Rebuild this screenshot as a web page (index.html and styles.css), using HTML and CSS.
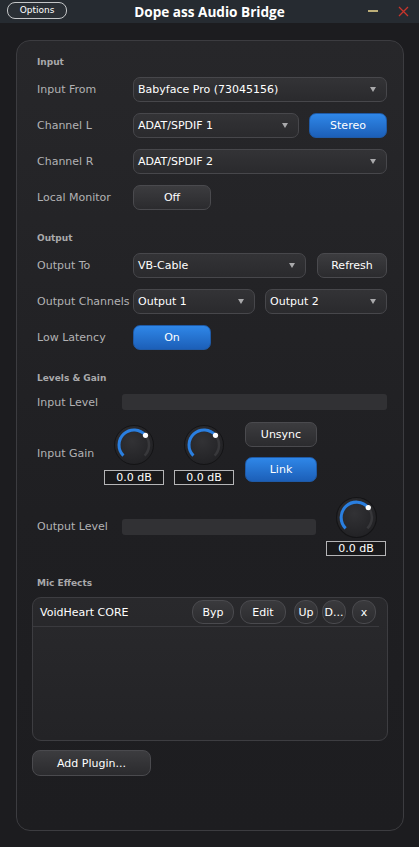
FILE: index.html
```html
<!DOCTYPE html>
<html>
<head>
<meta charset="utf-8">
<title>Dope ass Audio Bridge</title>
<link rel="stylesheet" href="styles.css">
</head>
<body>
<div class="app">
  <header class="titlebar">
    <div class="tb-left"><button class="opt-btn">Options</button></div>
    <div class="title">Dope ass Audio Bridge</div>
    <div class="tb-right">
      <span class="win-min"></span>
      <svg class="win-close" width="11" height="11" viewBox="0 0 11 11"><path d="M1 1L10 10M10 1L1 10" stroke="#c8352c" stroke-width="1.3" fill="none"/></svg>
    </div>
  </header>

  <main class="panel">
    <div class="sec first">Input</div>
    <div class="rows">
      <div class="row">
        <span class="lbl">Input From</span>
        <div class="combo grow"><span>Babyface Pro (73045156)</span><i class="arrow"></i></div>
      </div>
      <div class="row">
        <span class="lbl">Channel L</span>
        <div class="combo grow"><span>ADAT/SPDIF 1</span><i class="arrow"></i></div>
        <button class="btn blue w78 ml10">Stereo</button>
      </div>
      <div class="row">
        <span class="lbl">Channel R</span>
        <div class="combo grow"><span>ADAT/SPDIF 2</span><i class="arrow"></i></div>
      </div>
      <div class="row">
        <span class="lbl">Local Monitor</span>
        <button class="btn w78">Off</button>
      </div>
    </div>

    <div class="sec">Output</div>
    <div class="rows">
      <div class="row">
        <span class="lbl">Output To</span>
        <div class="combo grow"><span>VB-Cable</span><i class="arrow"></i></div>
        <button class="btn w70 ml11">Refresh</button>
      </div>
      <div class="row">
        <span class="lbl">Output Channels</span>
        <div class="combo grow"><span>Output 1</span><i class="arrow"></i></div>
        <div class="combo grow ml10"><span>Output 2</span><i class="arrow"></i></div>
      </div>
      <div class="row">
        <span class="lbl">Low Latency</span>
        <button class="btn blue w78">On</button>
      </div>
    </div>

    <div class="sec">Levels &amp; Gain</div>
    <div class="level-row">
      <span class="lbl lbl-level">Input Level</span>
      <div class="meter"></div>
    </div>

    <div class="gain-row">
      <span class="lbl lbl-gain">Input Gain</span>
      <div class="knob-col">
        <svg class="knob" width="40" height="40" viewBox="0 0 40 40">
          <defs><radialGradient id="kg1" cx="45%" cy="40%" r="60%"><stop offset="0" stop-color="#323235"/><stop offset="1" stop-color="#222225"/></radialGradient></defs>
          <circle cx="20" cy="20" r="19.5" fill="url(#kg1)" stroke="#141416"/>
          <path d="M31.49 10.36A15 15 0 0 1 30.61 30.61" stroke="#38383b" stroke-width="2.5" fill="none"/>
          <path d="M9.39 30.61A15 15 0 1 1 31.49 10.36" stroke="#2a7fe0" stroke-width="3" fill="none"/>
          <circle cx="31.49" cy="10.36" r="2.6" fill="#ffffff"/>
        </svg>
        <div class="val">0.0 dB</div>
      </div>
      <div class="knob-col ml10">
        <svg class="knob" width="40" height="40" viewBox="0 0 40 40">
          <defs><radialGradient id="kg2" cx="45%" cy="40%" r="60%"><stop offset="0" stop-color="#323235"/><stop offset="1" stop-color="#222225"/></radialGradient></defs>
          <circle cx="20" cy="20" r="19.5" fill="url(#kg2)" stroke="#141416"/>
          <path d="M31.49 10.36A15 15 0 0 1 30.61 30.61" stroke="#38383b" stroke-width="2.5" fill="none"/>
          <path d="M9.39 30.61A15 15 0 1 1 31.49 10.36" stroke="#2a7fe0" stroke-width="3" fill="none"/>
          <circle cx="31.49" cy="10.36" r="2.6" fill="#ffffff"/>
        </svg>
        <div class="val">0.0 dB</div>
      </div>
      <div class="sync-col">
        <button class="btn w72">Unsync</button>
        <button class="btn blue w72">Link</button>
      </div>
    </div>

    <div class="out-row">
      <span class="lbl lbl-level">Output Level</span>
      <div class="meter"></div>
      <div class="knob-col out-knob">
        <svg class="knob" width="41" height="41" viewBox="0 0 40 40">
          <defs><radialGradient id="kg3" cx="45%" cy="40%" r="60%"><stop offset="0" stop-color="#323235"/><stop offset="1" stop-color="#222225"/></radialGradient></defs>
          <circle cx="20" cy="20" r="19.5" fill="url(#kg3)" stroke="#141416"/>
          <path d="M31.49 10.36A15 15 0 0 1 30.61 30.61" stroke="#38383b" stroke-width="2.5" fill="none"/>
          <path d="M9.39 30.61A15 15 0 1 1 31.49 10.36" stroke="#2a7fe0" stroke-width="3" fill="none"/>
          <circle cx="31.49" cy="10.36" r="2.6" fill="#ffffff"/>
        </svg>
        <div class="val">0.0 dB</div>
      </div>
    </div>

    <div class="sec mic">Mic Effects</div>
    <div class="fx-box">
      <div class="fx-item">
        <span class="fx-name">VoidHeart CORE</span>
        <button class="pill w42">Byp</button>
        <button class="pill w46">Edit</button>
        <button class="pill w24 pill-up">Up</button>
        <button class="pill w24 pill-down">D...</button>
        <button class="pill w24">x</button>
      </div>
    </div>
    <button class="btn add-btn">Add Plugin...</button>
  </main>
</div>
</body>
</html>
```

FILE: styles.css
```css
* { box-sizing: border-box; }
html, body { margin: 0; padding: 0; }
body {
  background: #1c1c1f;
  font-family: "DejaVu Sans", "Liberation Sans", sans-serif;
  font-size: 11px;
  color: #ffffff;
}
.app {
  height: 847px;
  display: flex;
  flex-direction: column;
}
.titlebar {
  height: 23px;
  flex: none;
  background: #262b31;
  display: grid;
  grid-template-columns: 1fr auto 1fr;
  align-items: center;
}
.tb-left { padding-left: 7px; display: flex; }
.opt-btn {
  width: 60px;
  height: 17px;
  margin-top: -2px;
  border: 1px solid #c4c6c8;
  border-radius: 8px;
  background: #2a2f35;
  color: #ffffff;
  font-family: "DejaVu Sans", sans-serif;
  font-size: 9px;
  padding: 0;
  line-height: 15px;
}
.title {
  font-family: "Open Sans", "DejaVu Sans", sans-serif;
  font-weight: 700;
  font-size: 13.6px;
  color: #ffffff;
  margin-top: -1px;
}
.tb-right {
  display: flex;
  justify-content: flex-end;
  align-items: center;
  gap: 20px;
  padding-right: 10px;
  margin-top: -1px;
}
.win-min {
  display: block;
  width: 10px;
  height: 2px;
  background: #bcae78;
}
.win-close { display: block; }

.panel {
  flex: 1;
  margin: 17px 15px 16px 16px;
  border: 1px solid #3c3c40;
  border-radius: 14px;
  background: linear-gradient(180deg, #27272a 0%, #1f1f22 60%, #1d1d20 100%);
  padding: 0 16px 0 20px;
  display: flex;
  flex-direction: column;
}
.sec {
  height: 12px;
  line-height: 12px;
  font-size: 9px;
  font-weight: bold;
  color: #a9a9ab;
  margin-top: 22px;
}
.sec.first { margin-top: 15px; }
.sec.mic { margin-top: 21px; }
.rows {
  margin-top: 9px;
  display: flex;
  flex-direction: column;
  gap: 11px;
}
.row {
  display: flex;
  align-items: center;
  height: 25px;
}
.lbl {
  width: 96px;
  flex: none;
  color: #b2b2b4;
  font-size: 11px;
  white-space: nowrap;
}
.grow { flex: 1; }
.ml10 { margin-left: 10px; }
.ml11 { margin-left: 11px; }
.combo {
  height: 25px;
  border: 1px solid #47474b;
  border-radius: 7px;
  background: linear-gradient(180deg, #333336 0%, #2a2a2d 100%);
  display: flex;
  align-items: center;
  padding: 0 10px 0 4px;
  color: #ffffff;
  font-size: 11px;
  min-width: 0;
}
.combo span { flex: 1; white-space: nowrap; }
.arrow {
  width: 0;
  height: 0;
  border-left: 3.5px solid transparent;
  border-right: 3.5px solid transparent;
  border-top: 5px solid #a9a9ab;
}
.btn {
  height: 25px;
  border: 1px solid #4a4a4e;
  border-radius: 7px;
  background: linear-gradient(180deg, #3c3c3f 0%, #2b2b2e 100%);
  color: #ffffff;
  font-family: "DejaVu Sans", sans-serif;
  font-size: 11px;
  padding: 0;
  flex: none;
}
.btn.blue {
  border-color: #1f5aa6;
  background: linear-gradient(180deg, #2f87e8 0%, #1c5fb8 100%);
}
.w78 { width: 78px; }
.w70 { width: 70px; }
.w72 { width: 72px; }
.w42 { width: 42px; }
.w46 { width: 46px; }
.w24 { width: 24px; }

.level-row {
  margin-top: 10px;
  display: flex;
  align-items: center;
  height: 16px;
}
.lbl-level { width: 85px; }
.meter {
  flex: 1;
  height: 16px;
  border-radius: 3px;
  background: #313134;
}
.gain-row {
  margin-top: 12px;
  display: flex;
  align-items: center;
}
.lbl-gain { width: 67px; }
.knob-col {
  width: 60px;
  display: flex;
  flex-direction: column;
  align-items: center;
  flex: none;
}
.knob { display: block; margin-top: 3px; }
.val {
  margin-top: 5px;
  width: 60px;
  height: 15px;
  border: 1px solid #b5b5b7;
  background: #19191b;
  color: #ffffff;
  font-size: 11px;
  line-height: 13px;
  text-align: center;
}
.sync-col {
  margin-left: 11px;
  display: flex;
  flex-direction: column;
  gap: 10px;
  align-self: flex-start;
}
.out-row {
  margin-top: 12px;
  display: flex;
  align-items: center;
}
.out-knob { margin-left: 10px; margin-right: 1px; }
.out-knob .knob { margin-top: 0; }
.out-knob .val { margin-top: 3px; }

.fx-box {
  margin: 8px -1px 0 -5px;
  height: 144px;
  border: 1px solid #3d3d41;
  border-radius: 9px;
  background: linear-gradient(180deg, #29292c 0%, #232326 100%);
}
.fx-item {
  height: 29px;
  margin-right: 8px;
  padding: 0 3px 0 7px;
  border-bottom: 1px solid #3a3a3e;
  display: flex;
  align-items: center;
  gap: 6px;
}
.fx-name {
  flex: 1;
  font-size: 11px;
  color: #ffffff;
  white-space: nowrap;
}
.pill {
  height: 24px;
  border: 1px solid #4a4a4e;
  border-radius: 11px;
  background: linear-gradient(180deg, #3a3a3d 0%, #2c2c2f 100%);
  color: #ffffff;
  font-family: "DejaVu Sans", sans-serif;
  font-size: 11px;
  padding: 0;
  flex: none;
  white-space: nowrap;
  overflow: hidden;
}
.pill-up { margin-left: 2px; }
.pill-down { margin-left: -2px; }
.add-btn {
  margin: 9px 0 0 -5px;
  width: 119px;
  height: 26px;
  border-radius: 8px;
  align-self: flex-start;
}
```
